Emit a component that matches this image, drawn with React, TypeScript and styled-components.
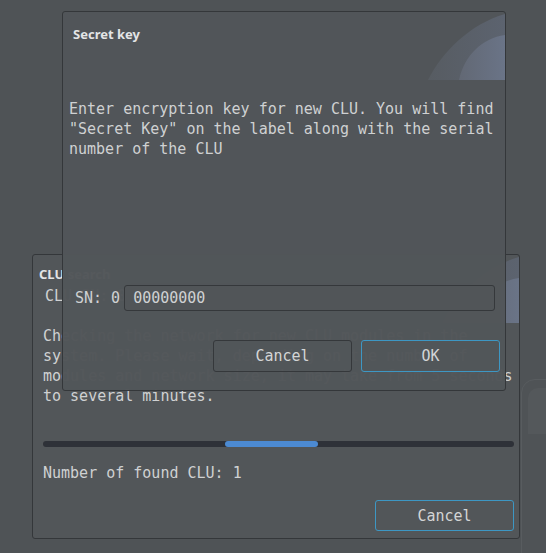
import React from "react";
import styled, { createGlobalStyle } from "styled-components";

const GlobalStyle = createGlobalStyle`
  html, body { margin: 0; padding: 0; background: #4f5356; }
  body { width: 546px; height: 553px; overflow: hidden; }
  #root { width: 546px; height: 553px; }
`;

const Desktop = styled.div`
  position: relative;
  width: 546px;
  height: 553px;
  background: #4f5356;
  overflow: hidden;
  font-family: "DejaVu Sans Mono", "Liberation Mono", monospace;
  color: #cfd1d2;
`;

const Window = styled.div<{ $left: number; $top: number; $w: number; $h: number; $alpha?: number }>`
  position: absolute;
  left: ${(p) => p.$left}px;
  top: ${(p) => p.$top}px;
  width: ${(p) => p.$w}px;
  height: ${(p) => p.$h}px;
  box-sizing: border-box;
  border: 1px solid #34373a;
  border-radius: 3px;
  background: rgba(82, 86, 89, ${(p) => p.$alpha ?? 1});
  display: flex;
  flex-direction: column;
  overflow: hidden;
`;

const Decor = styled.svg`
  position: absolute;
  top: 2px;
  right: 0;
  pointer-events: none;
`;

const Title = styled.div<{ $pt: number; $ml: number }>`
  font-family: "Noto Sans", "Open Sans", sans-serif;
  font-weight: 700;
  font-size: 13px;
  line-height: 18px;
  color: #e4e5e6;
  padding-top: ${(p) => p.$pt}px;
  margin-left: ${(p) => p.$ml}px;
`;

const Body = styled.div<{ $pl: number; $pr: number; $pb: number }>`
  flex: 1;
  display: flex;
  flex-direction: column;
  padding: 0 ${(p) => p.$pr}px ${(p) => p.$pb}px ${(p) => p.$pl}px;
`;

const Text = styled.div<{ $mt?: number; $ml?: number }>`
  font-size: 15px;
  line-height: 20px;
  white-space: pre;
  margin-top: ${(p) => p.$mt ?? 0}px;
  margin-left: ${(p) => p.$ml ?? 0}px;
`;

const Spacer = styled.div`
  flex: 1;
`;

const FieldRow = styled.div<{ $mt?: number; $ml?: number; $mr?: number }>`
  display: flex;
  align-items: center;
  gap: 4px;
  height: 26px;
  margin-top: ${(p) => p.$mt ?? 0}px;
  margin-left: ${(p) => p.$ml ?? 0}px;
  margin-right: ${(p) => p.$mr ?? 0}px;
`;

const Label = styled.span`
  font-size: 15px;
  line-height: 20px;
  white-space: pre;
`;

const Input = styled.div`
  flex: 1;
  height: 26px;
  box-sizing: border-box;
  border: 1px solid #35383b;
  border-radius: 3px;
  background: #515558;
  font-size: 15px;
  line-height: 24px;
  padding-left: 8px;
`;

const ButtonRow = styled.div<{ $mt: number }>`
  display: flex;
  justify-content: flex-end;
  gap: 9px;
  margin-top: ${(p) => p.$mt}px;
`;

const Button = styled.div<{ $primary?: boolean; $h: number }>`
  width: 139px;
  height: ${(p) => p.$h}px;
  box-sizing: border-box;
  border: 1px solid ${(p) => (p.$primary ? "#3d97c4" : "#35383b")};
  border-radius: 3px;
  display: flex;
  align-items: center;
  justify-content: center;
  font-size: 15px;
  color: #d3d5d6;
`;

const Track = styled.div`
  height: 6px;
  border-radius: 3px;
  background: #2e3138;
  margin-top: 35px;
  position: relative;
`;

const Chunk = styled.div`
  position: absolute;
  top: 0;
  height: 6px;
  border-radius: 3px;
  background: #4c8ad2;
`;

const ThirdWindow = styled.div`
  position: absolute;
  left: 521px;
  top: 379px;
  width: 60px;
  height: 200px;
  box-sizing: border-box;
  border: 1px solid #585c5f;
  border-radius: 14px;
  background: #4f5356;
  padding: 8px 0 0 6px;
`;

const ThirdInner = styled.div`
  height: 46px;
  border-radius: 10px 0 0 0;
  background: #54585b;
`;

const Decoration: React.FC<{ id: string }> = ({ id }) => (
  <Decor width="77" height="66" viewBox="0 0 77 66">
    <defs>
      <linearGradient id={`${id}a`} x1="0" y1="0" x2="1" y2="0">
        <stop offset="0" stopColor="#575c62" />
        <stop offset="1" stopColor="#5c636f" />
      </linearGradient>
      <linearGradient id={`${id}b`} x1="0" y1="0" x2="1" y2="0">
        <stop offset="0" stopColor="#626874" />
        <stop offset="1" stopColor="#6a7487" />
      </linearGradient>
    </defs>
    <path d="M0 66 C 14 38, 42 10, 77 0 L77 66 Z" fill={`url(#${id}a)`} />
    <path d="M31 66 C 36 42, 54 24, 77 21 L77 66 Z" fill={`url(#${id}b)`} />
  </Decor>
);

export default function App() {
  const progressLeft = 182;
  const progressWidth = 93;
  return (
    <>
      <GlobalStyle />
      <Desktop>
        <ThirdWindow>
          <ThirdInner />
        </ThirdWindow>

        <Window $left={32} $top={254} $w={488} $h={285}>
          <Decoration id="bg" />
          <Title $pt={10} $ml={6}>CLU search</Title>
          <Body $pl={10} $pr={5} $pb={6}>
            <FieldRow $ml={2}>
              <Label>CLU SN: 0</Label>
              <Input>00000000</Input>
            </FieldRow>
            <Text $mt={17}>
              {"Checking the network for new CLU modules in the\nsystem. Please wait, depending on the number of\nmodules and network size, it may take from 5 seconds\nto several minutes."}
            </Text>
            <Track>
              <Chunk style={{ left: progressLeft, width: progressWidth }} />
            </Track>
            <Text $mt={16}>Number of found CLU: 1</Text>
            <ButtonRow $mt={17}>
              <Button $primary $h={31}>Cancel</Button>
            </ButtonRow>
          </Body>
        </Window>

        <Window $left={62} $top={11} $w={444} $h={380} $alpha={0.98}>
          <Decoration id="fg" />
          <Title $pt={13} $ml={10}>Secret key</Title>
          <Body $pl={6} $pr={5} $pb={18}>
            <Text $mt={56}>
              {"Enter encryption key for new CLU. You will find\n\"Secret Key\" on the label along with the serial\nnumber of the CLU"}
            </Text>
            <Spacer />
            <FieldRow $ml={6} $mr={5}>
              <Label>SN: 0</Label>
              <Input>00000000</Input>
            </FieldRow>
            <ButtonRow $mt={29}>
              <Button $h={32}>Cancel</Button>
              <Button $primary $h={32}>OK</Button>
            </ButtonRow>
          </Body>
        </Window>
      </Desktop>
    </>
  );
}
